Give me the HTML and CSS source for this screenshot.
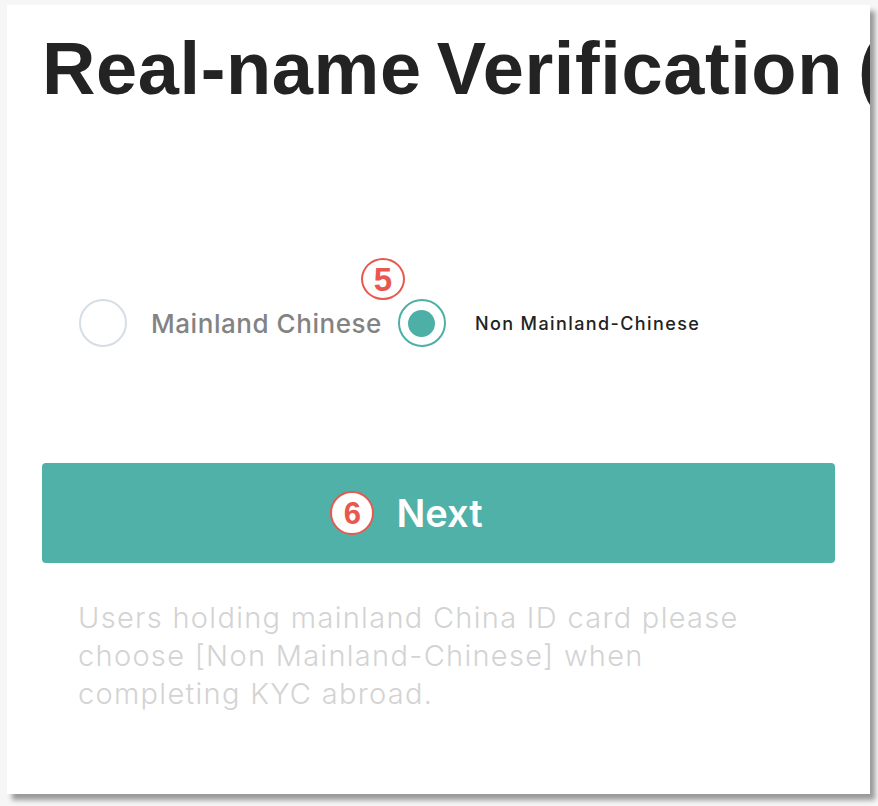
FILE: index.html
```html
<!DOCTYPE html>
<html lang="en">
<head>
    <meta charset="UTF-8">
    <meta name="viewport" content="width=device-width, initial-scale=1.0">
    <title>Real-name Verification</title>
    <link rel="stylesheet" href="styles.css">
</head>
<body>
    <div class="frame">
        <div class="card">
            <h1>Real-name Verification (KYC)</h1>

            <div class="options">
                <label class="option">
                    <span class="radio"></span>
                    <span class="option-text muted">Mainland Chinese</span>
                </label>
                <label class="option">
                    <span class="radio checked"><span class="dot"></span></span>
                    <span class="mark mark-five">5</span>
                    <span class="option-text small">Non Mainland-Chinese</span>
                </label>
            </div>

            <button class="next" type="button">
                <span class="mark mark-six">6</span>
                <span>Next</span>
            </button>

            <p class="hint">Users holding mainland China ID card please<br>choose [Non Mainland-Chinese] when<br>completing KYC abroad.</p>
        </div>
    </div>
</body>
</html>
```

FILE: styles.css
```css
* {
    box-sizing: border-box;
    margin: 0;
    padding: 0;
}

body {
    font-family: 'Inter', 'Liberation Sans', Arial, sans-serif;
    background: #f6f6f6;
    width: 878px;
    height: 806px;
    overflow: hidden;
}

.frame {
    padding: 5px 0 0 7px;
}

.card {
    width: 863px;
    height: 789px;
    background: #fff;
    overflow: hidden;
    padding: 27px 35px 0 35px;
    box-shadow: 5px 6px 5px rgba(0, 0, 0, 0.38);
    display: flex;
    flex-direction: column;
}

h1 {
    font-family: 'Liberation Sans', Arial, sans-serif;
    font-weight: 700;
    font-size: 74px;
    line-height: 1;
    color: #232323;
    white-space: nowrap;
    letter-spacing: 0.6px;
    word-spacing: -6px;
}

.options {
    display: flex;
    align-items: center;
    margin-top: 193px;
    padding-left: 37px;
    height: 48px;
}

.option {
    display: flex;
    align-items: center;
    position: relative;
}

.radio {
    width: 48px;
    height: 48px;
    border-radius: 50%;
    border: 2px solid #d6dde6;
    display: flex;
    align-items: center;
    justify-content: center;
    flex-shrink: 0;
}

.radio.checked {
    border: 2.5px solid #4db0a6;
}

.dot {
    width: 27px;
    height: 27px;
    border-radius: 50%;
    background: #4db0a6;
}

.option-text {
    white-space: nowrap;
}

.muted {
    margin-left: 24px;
    margin-right: 16px;
    font-size: 26px;
    font-weight: 500;
    color: #838383;
    letter-spacing: 0.55px;
}

.small {
    margin-left: 29px;
    font-size: 18px;
    font-weight: 500;
    color: #222;
    letter-spacing: 1.4px;
}

.mark {
    display: flex;
    align-items: center;
    justify-content: center;
    border-radius: 50%;
    color: #e9584e;
    font-family: 'Liberation Sans', Arial, sans-serif;
    line-height: 1;
}

.mark-five {
    position: absolute;
    left: -37px;
    top: -41px;
    width: 44px;
    height: 42px;
    border: 2.5px solid #e9584e;
    background: #fff;
    font-size: 33px;
    font-weight: 700;
}

.next {
    margin-top: 116px;
    height: 100px;
    width: 793px;
    border: none;
    border-radius: 4px;
    background: #4fb1a7;
    color: #fff;
    font-family: 'Inter', 'Liberation Sans', Arial, sans-serif;
    font-size: 38px;
    font-weight: 600;
    display: flex;
    align-items: center;
    justify-content: center;
    gap: 22px;
    padding-right: 64px;
}

.mark-six {
    width: 44px;
    height: 44px;
    border: 2.5px solid #e9584e;
    background: #fff;
    font-size: 31px;
    font-weight: 700;
}

.hint {
    margin-top: 36px;
    padding-left: 36px;
    font-size: 29px;
    line-height: 38px;
    font-weight: 300;
    color: #d3d3d3;
    letter-spacing: 1.3px;
    white-space: nowrap;
}
```
